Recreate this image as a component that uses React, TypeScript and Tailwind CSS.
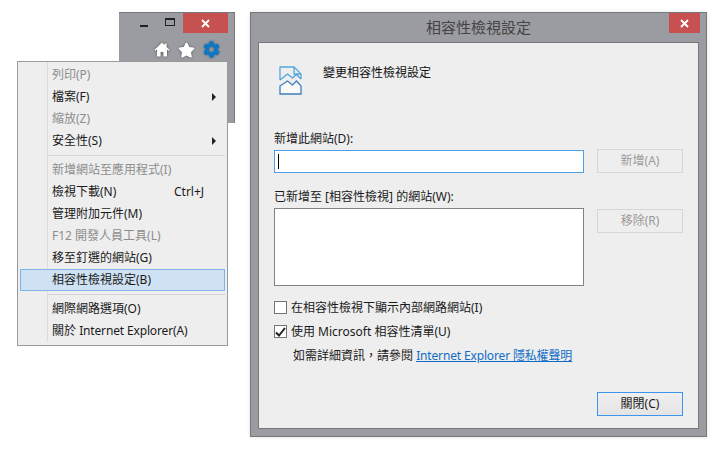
import React from 'react';
import { FaCog, FaStar } from 'react-icons/fa';

const font = { fontFamily: '"Noto Sans", "Noto Sans CJK TC", sans-serif' };

type Item = { label: React.ReactNode; disabled?: boolean; arrow?: boolean; shortcut?: string; active?: boolean } | 'sep';

const items: Item[] = [
  { label: '列印(P)', disabled: true },
  { label: '檔案(F)', arrow: true },
  { label: '縮放(Z)', disabled: true },
  { label: '安全性(S)', arrow: true },
  'sep',
  { label: '新增網站至應用程式(I)', disabled: true },
  { label: '檢視下載(N)', shortcut: 'Ctrl+J' },
  { label: '管理附加元件(M)' },
  { label: 'F12 開發人員工具(L)', disabled: true },
  { label: '移至釘選的網站(G)' },
  { label: '相容性檢視設定(B)', active: true },
  'sep',
  { label: '網際網路選項(O)' },
  { label: <>關於 <span className="tracking-[-0.15px]">Internet Explorer(A)</span></> },
];

const CloseX = () => (
  <svg width="9" height="9" viewBox="0 0 9 9">
    <path d="M1 1l7 7M8 1L1 8" stroke="#fff" strokeWidth="1.8" />
  </svg>
);

const BrowserFrame = () => (
  <div className="absolute left-[119px] top-[12px] w-[116px] h-[111px] bg-[#9b9ca1] border-t border-r border-[#77787c]">
    <div className="flex justify-end items-start pr-[6px]">
      <div className="w-[26px] h-[20px] flex items-center justify-center">
        <div className="w-[8px] h-[2px] bg-[#222] mt-[6px]" />
      </div>
      <div className="w-[26px] h-[20px] flex items-center justify-center">
        <div className="w-[10px] h-[8px] border border-[#222] border-t-2 -mt-[2px]" />
      </div>
      <div className="w-[45px] h-[20px] bg-[#c75050] flex items-center justify-center">
        <CloseX />
      </div>
    </div>
    <div className="flex items-center gap-[8px] pl-[35px] mt-[8px]">
      <svg width="16" height="15" viewBox="0 0 16 15" className="drop-shadow-[0_0_1px_rgba(0,0,0,0.6)]">
        <path d="M8 .5 .5 7.8l1 1L3 7.4V14.5h3.6V10h2.8v4.5H13V7.4l1.5 1.4 1-1L12.6 5V1.4h-2v1.7z" fill="#fff" />
      </svg>
      <FaStar className="text-white w-[17px] h-[16px] drop-shadow-[0_0_1px_rgba(0,0,0,0.5)]" />
      <FaCog className="text-[#0e78c4] w-[17px] h-[17px] drop-shadow-[0_0_1px_rgba(0,40,80,0.5)]" />
    </div>
  </div>
);

const ContextMenu = () => (
  <div className="absolute left-[17px] top-[61px] w-[211px] h-[285px] bg-[#eeeeee] border border-[#9a9a9a] py-[2px]">
    <div className="absolute left-[29px] top-0 bottom-[3px] w-px bg-[#dcdcdc]" />
    {items.map((item, i) =>
      item === 'sep' ? (
        <div key={i} className="h-[7px] flex items-center pl-[29px] pr-[2px]">
          <div className="w-full h-px bg-[#d6d6d6]" />
        </div>
      ) : (
        <div
          key={i}
          className={`relative h-[22px] flex items-center pl-[34px] text-[12px] leading-[22px] ${
            item.disabled ? 'text-[#8d8d8d]' : 'text-[#1a1a1a]'
          }`}
        >
          {item.active && (
            <div className="absolute left-[2px] right-[2px] top-0 bottom-0 bg-[#cfe2f3] border border-[#7fb4e6]" />
          )}
          <span className="relative whitespace-nowrap">{item.label}</span>
          {item.shortcut && <span className="absolute left-[156px]">{item.shortcut}</span>}
          {item.arrow && (
            <span className="absolute left-[194px] top-[7px] w-0 h-0 border-y-[4px] border-y-transparent border-l-[4px] border-l-[#222]" />
          )}
        </div>
      ),
    )}
  </div>
);

const PageIcon = () => (
  <svg width="23" height="29" viewBox="0 0 23 29" fill="none">
    <path d="M1 14V1H15L22 8V13" stroke="#55a9dc" strokeWidth="1.3" />
    <path d="M15 1V8H22" stroke="#55a9dc" strokeWidth="1.3" />
    <path d="M1 14 8.5 8l5 4 4-3.5L22 13" stroke="#4f9fd6" strokeWidth="1.3" />
    <path d="M1 20 8.5 15l5 4 4-4 4.5 5V28H1z" fill="#fafafa" stroke="#3f7fbb" strokeWidth="1.3" />
  </svg>
);

const SideButton = ({ label }: { label: string }) => (
  <div className="w-[86px] h-[24px] border border-[#d6d6d6] flex items-center justify-center text-[12px] text-[#9a9a9a]">
    {label}
  </div>
);

const Dialog = () => (
  <div className="absolute left-[250px] top-[12px] w-[457px] h-[425px] bg-[#9b9ca1] border border-[#77787c] shadow-[0_0_4px_rgba(0,0,0,0.12)] flex flex-col">
    <div className="relative h-[29px] shrink-0 flex items-center justify-center text-[15px] text-[#444]">
      相容性檢視設定
      <div className="absolute right-[6px] top-0 w-[31px] h-[20px] bg-[#c75050] flex items-center justify-center">
        <CloseX />
      </div>
    </div>
    <div className="mx-[7px] mb-[7px] flex-1 bg-[#eeeeee] border border-[#77787c] pl-[15px] pr-[15px] text-[12px] text-[#1a1a1a]">
      <div className="flex items-start h-[84px] pt-[23px] pl-[5px]">
        <PageIcon />
        <span className="ml-[21px] leading-[16px] -mt-px text-[#111]">變更相容性檢視設定</span>
      </div>
      <div className="leading-[20px] h-[23px] pt-[2px]">新增此網站(D):</div>
      <div className="flex items-start gap-[13px]">
        <div className="w-[310px] h-[23px] bg-white border border-[#4d9fe8] flex items-center pl-[3px]">
          <div className="w-px h-[15px] bg-black" />
        </div>
        <div className="-mt-px">
          <SideButton label="新增(A)" />
        </div>
      </div>
      <div className="leading-[20px] h-[35px] pt-[14px]">已新增至 [相容性檢視] 的網站(W):</div>
      <div className="flex items-start gap-[13px]">
        <div className="w-[310px] h-[78px] bg-white border border-[#7f848a]" />
        <div className="mt-px">
          <SideButton label="移除(R)" />
        </div>
      </div>
      <div className="flex items-center gap-[4px] h-[13px] mt-[15px]">
        <div className="w-[13px] h-[13px] bg-white border border-[#70757a]" />
        <span className="leading-[13px] whitespace-nowrap">在相容性檢視下顯示內部網路網站(I)</span>
      </div>
      <div className="flex items-center gap-[4px] h-[13px] mt-[11px]">
        <div className="w-[13px] h-[13px] bg-white border border-[#70757a] flex items-center justify-center">
          <svg width="11" height="10" viewBox="0 0 11 10">
            <path d="M1 5.5 4 8.5 10 1" fill="none" stroke="#222" strokeWidth="2" />
          </svg>
        </div>
        <span className="leading-[13px] whitespace-nowrap">使用 Microsoft 相容性清單(U)</span>
      </div>
      <div className="pl-[19px] mt-[8px] h-[20px] leading-[20px] whitespace-nowrap">
        如需詳細資訊，請參閱 <a className="text-[#0f6cc5] underline tracking-[-0.15px]">Internet Explorer 隱私權聲明</a>
      </div>
      <div className="flex justify-end mt-[26px] w-[409px]">
        <div className="w-[86px] h-[24px] border border-[#3a96ee] bg-gradient-to-b from-[#f0f0f0] to-[#e4e4e4] flex items-center justify-center">
          關閉(C)
        </div>
      </div>
    </div>
  </div>
);

export default function App() {
  return (
    <div className="relative w-[720px] h-[450px] bg-white overflow-hidden" style={font}>
      <BrowserFrame />
      <ContextMenu />
      <Dialog />
    </div>
  );
}
